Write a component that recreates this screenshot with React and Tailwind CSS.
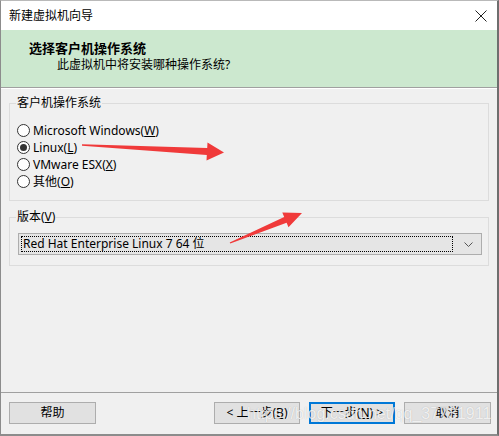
import React from 'react'

const ui = "font-['Noto_Sans','Noto_Sans_CJK_SC',sans-serif]"

const systems = [
  { label: 'Microsoft Windows', key: 'W' },
  { label: 'Linux', key: 'L', checked: true },
  { label: 'VMware ESX', key: 'X' },
  { label: '其他', key: 'O' },
]

function Radio({ checked }) {
  return (
    <span className="flex h-[13px] w-[13px] shrink-0 items-center justify-center rounded-full border border-[#333] bg-white">
      {checked && <span className="h-[7px] w-[7px] rounded-full bg-[#333]" />}
    </span>
  )
}

function Button({ children, primary, className = '' }) {
  return (
    <button
      className={[
        'flex h-[22px] items-center justify-center bg-[#e1e1e1] text-[12px] text-black',
        primary ? 'border-2 border-[#0078d7]' : 'border border-[#adadad]',
        className,
      ].join(' ')}
    >
      {children}
    </button>
  )
}

export default function App() {
  return (
    <div className={`relative flex h-[436px] w-[499px] flex-col overflow-hidden border-t border-l border-r-2 border-b-2 border-t-[#b9b9b9] border-l-[#8c8c8c] border-r-[#6e6e6e] border-b-[#8c8c8c] bg-[#f0f0f0] text-black ${ui}`}>
      {/* title bar */}
      <div className="flex h-[29px] shrink-0 items-center justify-between bg-white pl-[8px] pr-[10px]">
        <span className="text-[12px] leading-none">新建虚拟机向导</span>
        <svg width="12" height="12" viewBox="0 0 12 12" className="text-[#222]">
          <path d="M0.5 0.5 L11.5 11.5 M11.5 0.5 L0.5 11.5" stroke="currentColor" strokeWidth="1" />
        </svg>
      </div>

      {/* header */}
      <div className="flex h-[57px] shrink-0 flex-col bg-[#cce8cf] pl-[28px] pt-[10px]">
        <div className="text-[13px] font-bold leading-[16px]">选择客户机操作系统</div>
        <div className="pl-[28px] text-[12px] leading-[17px]">此虚拟机中将安装哪种操作系统?</div>
      </div>
      <div className="h-px shrink-0 bg-[#a0a0a0]" />
      <div className="h-px shrink-0 bg-white" />

      {/* guest OS group */}
      <fieldset className="mx-[8px] mt-[6px] h-[106px] shrink-0 border border-[#dcdcdc] pl-[6px]">
        <legend className="px-[1px] text-[12px] leading-[16px]">客户机操作系统</legend>
        <div className="ml-[1px] mt-[11px] flex flex-col">
          {systems.map((s) => (
            <label key={s.key} className="flex h-[17px] items-center gap-[3px] text-[12px] leading-none">
              <Radio checked={s.checked} />
              <span>
                {s.label}(<span className="underline">{s.key}</span>)
              </span>
            </label>
          ))}
        </div>
      </fieldset>

      {/* version group */}
      <fieldset className="mx-[8px] mt-[8px] h-[57px] shrink-0 border border-[#dcdcdc] pl-[6px]">
        <legend className="px-[1px] text-[12px] leading-[16px]">
          版本(<span className="underline">V</span>)
        </legend>
        <div className="ml-[2px] mt-[8px] flex h-[22px] w-[464px] items-center border border-[#adadad] bg-[#e5e5e5] pl-[2px] pr-[8px]">
          <div className="flex h-[16px] flex-1 items-center border border-dotted border-black pl-[1px] text-[12px] leading-none">
            Red Hat Enterprise Linux 7 64 位
          </div>
          <svg width="9" height="5" viewBox="0 0 9 5" className="ml-[11px] text-[#555]">
            <path d="M0.5 0.5 L4.5 4.5 L8.5 0.5" fill="none" stroke="currentColor" strokeWidth="1" />
          </svg>
        </div>
      </fieldset>

      <div className="flex-1" />

      {/* footer */}
      <div className="h-px shrink-0 bg-[#a0a0a0]" />
      <div className="flex h-[41px] shrink-0 items-start pl-[8px] pt-[9px]">
        <Button className="w-[87px]">帮助</Button>
        <Button className="ml-[118px] w-[86px]">
          &lt; 上一步(<span className="underline">B</span>)
        </Button>
        <Button primary className="ml-[9px] w-[86px]">
          下一步(<span className="underline">N</span>) &gt;
        </Button>
        <Button className="ml-[9px] w-[87px]">取消</Button>
      </div>

      {/* annotation arrows */}
      <svg className="pointer-events-none absolute left-[-1px] top-[-1px]" width="499" height="436" viewBox="0 0 499 436">
        <polygon
          points="82,144.3 207.2,148.1 207.5,142.6 224,152.5 206.5,160.6 206.8,155.1 82,145.7"
          fill="#f03a3a"
        />
        <polygon
          points="229.7,242.4 284.2,217.1 282.3,212.5 302,213 288.5,227.3 286.6,222.7 230.3,243.6"
          fill="#f03a3a"
        />
      </svg>

      {/* watermark */}
      <div className="pointer-events-none absolute left-[246px] top-[403px] font-['Liberation_Sans',sans-serif] text-[16px] leading-[20px] text-white/80 [text-shadow:0_0_1px_rgba(0,0,0,0.25)]">
        https://blog.csdn.net/qq_37731911
      </div>
    </div>
  )
}
